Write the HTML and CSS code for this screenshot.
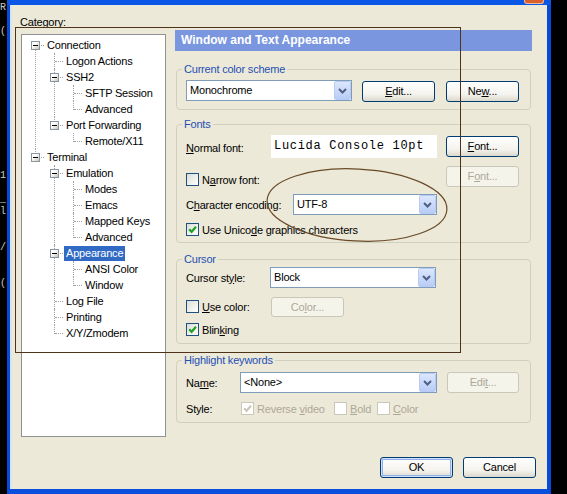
FILE: index.html
```html
<!DOCTYPE html>
<html>
<head>
<meta charset="utf-8">
<title>Global Options</title>
<link rel="stylesheet" href="styles.css">
</head>
<body>
<div class="screen">
  <div class="console">
    <div class="ln">R</div>
    <div class="ln"></div>
    <div class="ln">(</div>
    <div class="ln"></div><div class="ln"></div><div class="ln"></div><div class="ln"></div>
    <div class="ln"></div><div class="ln"></div><div class="ln"></div><div class="ln"></div>
    <div class="ln"></div><div class="ln"></div><div class="ln"></div>
    <div class="ln">1</div>
    <div class="ln"></div>
    <div class="ln">_</div>
    <div class="ln">l</div>
    <div class="ln"></div><div class="ln"></div>
    <div class="ln">/</div>
    <div class="ln"></div><div class="ln"></div>
    <div class="ln">(</div>
  </div>
  <div class="window">
    <div class="titlebar"><span class="close"></span></div>
    <div class="frame">
      <div class="client">
        <div class="main">
          <div class="nav">
            <div class="cat-label">Category:</div>
            <div class="tree">
              <ul class="tree-list">
                <li><div class="node"><span class="toggle"></span><span class="name">Connection</span></div>
                  <ul>
                    <li><div class="node"><span class="name">Logon Actions</span></div></li>
                    <li><div class="node"><span class="toggle"></span><span class="name">SSH2</span></div>
                      <ul>
                        <li><div class="node"><span class="name">SFTP Session</span></div></li>
                        <li><div class="node"><span class="name">Advanced</span></div></li>
                      </ul>
                    </li>
                    <li><div class="node"><span class="toggle"></span><span class="name">Port Forwarding</span></div>
                      <ul>
                        <li><div class="node"><span class="name">Remote/X11</span></div></li>
                      </ul>
                    </li>
                  </ul>
                </li>
                <li><div class="node"><span class="toggle"></span><span class="name">Terminal</span></div>
                  <ul>
                    <li><div class="node"><span class="toggle"></span><span class="name">Emulation</span></div>
                      <ul>
                        <li><div class="node"><span class="name">Modes</span></div></li>
                        <li><div class="node"><span class="name">Emacs</span></div></li>
                        <li><div class="node"><span class="name">Mapped Keys</span></div></li>
                        <li><div class="node"><span class="name">Advanced</span></div></li>
                      </ul>
                    </li>
                    <li><div class="node"><span class="toggle"></span><span class="name selected">Appearance</span></div>
                      <ul>
                        <li><div class="node"><span class="name">ANSI Color</span></div></li>
                        <li><div class="node"><span class="name">Window</span></div></li>
                      </ul>
                    </li>
                    <li><div class="node"><span class="name">Log File</span></div></li>
                    <li><div class="node"><span class="name">Printing</span></div></li>
                    <li><div class="node"><span class="name">X/Y/Zmodem</span></div></li>
                  </ul>
                </li>
              </ul>
            </div>
          </div>

          <div class="panel">
            <div class="panel-title">Window and Text Appearance</div>

            <fieldset class="group g-scheme">
              <legend>Current color scheme</legend>
              <div class="row row-scheme">
                <div class="combo combo-scheme"><span class="combo-text">Monochrome</span><span class="drop"><svg viewBox="0 0 15 17"><path d="M4 7l3.5 3.5L11 7"/></svg></span></div>
                <button class="btn btn-edit"><u>E</u>dit...</button>
                <button class="btn btn-new">Ne<u>w</u>...</button>
              </div>
            </fieldset>

            <fieldset class="group g-fonts">
              <legend>Fonts</legend>
              <div class="fonts-grid">
                <div class="col-main">
                  <div class="row row-font">
                    <span class="lbl lbl-font"><u>N</u>ormal font:</span>
                    <span class="fontbox">Lucida Console 10pt</span>
                  </div>
                  <div class="row row-narrow">
                    <span class="check"><span class="chk"></span><span>N<u>a</u>rrow font:</span></span>
                  </div>
                  <div class="row row-enc">
                    <span class="lbl lbl-enc">C<u>h</u>aracter encoding:</span>
                    <div class="combo combo-enc"><span class="combo-text">UTF-8</span><span class="drop"><svg viewBox="0 0 15 17"><path d="M4 7l3.5 3.5L11 7"/></svg></span></div>
                  </div>
                  <div class="row row-unicode">
                    <span class="check"><span class="chk"><svg class="tick" viewBox="0 0 11 11"><path d="M2.2 5.2l2.4 2.6 4.4-5"/></svg></span><span>Use Unico<u>d</u>e graphics characters</span></span>
                  </div>
                </div>
                <div class="col-btns">
                  <button class="btn btn-font"><u>F</u>ont...</button>
                  <button class="btn btn-font2" disabled>F<u>o</u>nt...</button>
                </div>
              </div>
            </fieldset>

            <fieldset class="group g-cursor">
              <legend>Cursor</legend>
              <div class="row row-cstyle">
                <span class="lbl lbl-cstyle">Cursor st<u>y</u>le:</span>
                <div class="combo combo-cstyle"><span class="combo-text">Block</span><span class="drop"><svg viewBox="0 0 15 17"><path d="M4 7l3.5 3.5L11 7"/></svg></span></div>
              </div>
              <div class="row row-usecolor">
                <span class="check check-usecolor"><span class="chk"></span><span><u>U</u>se color:</span></span>
                <button class="btn btn-color" disabled>Co<u>l</u>or...</button>
              </div>
              <div class="row row-blink">
                <span class="check"><span class="chk"><svg class="tick" viewBox="0 0 11 11"><path d="M2.2 5.2l2.4 2.6 4.4-5"/></svg></span><span>Blin<u>k</u>ing</span></span>
              </div>
            </fieldset>

            <fieldset class="group g-highlight">
              <legend>Highlight keywords</legend>
              <div class="row row-name">
                <span class="lbl lbl-name">Na<u>m</u>e:</span>
                <div class="combo combo-name"><span class="combo-text">&lt;None&gt;</span><span class="drop"><svg viewBox="0 0 15 17"><path d="M4 7l3.5 3.5L11 7"/></svg></span></div>
                <button class="btn btn-hedit" disabled>Edi<u>t</u>...</button>
              </div>
              <div class="row row-style">
                <span class="lbl lbl-style">Style:</span>
                <span class="check dis opt-reverse"><span class="chk"><svg class="tick" viewBox="0 0 11 11"><path d="M2.2 5.2l2.4 2.6 4.4-5"/></svg></span><span>Reverse <u>v</u>ideo</span></span>
                <span class="check dis opt-bold"><span class="chk"></span><span><u>B</u>old</span></span>
                <span class="check dis opt-color"><span class="chk"></span><span><u>C</u>olor</span></span>
              </div>
            </fieldset>
          </div>
        </div>

        <div class="actions">
          <button class="btn btn-default">OK</button>
          <button class="btn">Cancel</button>
        </div>
      </div>
    </div>
  </div>
</div>

<svg class="annot" width="567" height="494" viewBox="0 0 567 494">
  <rect x="15.5" y="27.5" width="445" height="325"/>
  <ellipse cx="357" cy="205" rx="90" ry="36" transform="rotate(3 357 205)"/>
</svg>
</body>
</html>
```

FILE: styles.css
```css
* { box-sizing: border-box; }

html, body { margin: 0; padding: 0; }

body {
  width: 567px;
  height: 494px;
  overflow: hidden;
  position: relative;
  background: #000;
  font-family: "Liberation Sans", Arial, sans-serif;
  font-size: 11px;
  letter-spacing: -0.2px;
  color: #000;
}

.screen {
  display: flex;
  height: 494px;
}

/* console behind the dialog (only a sliver visible) */
.console {
  width: 7px;
  flex: none;
  overflow: hidden;
  display: flex;
  flex-direction: column;
  padding-top: 2px;
  font-family: "Liberation Mono", monospace;
  font-size: 10px;
  line-height: 12px;
  letter-spacing: 0;
  color: #c8c8c8;
}
.console .ln {
  height: 12px;
  white-space: nowrap;
}

/* dialog window */
.window {
  width: 544px;
  flex: none;
  display: flex;
  flex-direction: column;
}

.titlebar {
  height: 5px;
  flex: none;
  background: #0a56e6;
  display: flex;
  justify-content: flex-end;
  padding-right: 7px;
}
.close {
  width: 20px;
  height: 4px;
  background: #d9602c;
  border: 1px solid #f1b89a;
  border-top: none;
  border-radius: 0 0 3px 3px;
}

.frame {
  flex: 1;
  display: flex;
  border-left: 3px solid #0749d8;
  border-right: 4px solid #0749d8;
  border-bottom: 5px solid #0a4fdc;
}

.client {
  flex: 1;
  display: flex;
  flex-direction: column;
  background: #ece9d8;
  border-left: 2px solid #d6e5f5;
}

.main {
  display: flex;
  padding: 11px 0 0 8px;
}

/* category tree */
.nav {
  width: 146px;
  flex: none;
}
.cat-label {
  line-height: 13px;
  margin-bottom: 5px;
}
.tree {
  margin-left: 1px;
  width: 145px;
  height: 403px;
  border: 1px solid #8f9293;
  background: #fff;
  padding-top: 2px;
  overflow: hidden;
}
.tree ul {
  list-style: none;
  margin: 0;
  padding: 0;
}
.tree ul ul {
  padding-left: 19px;
}
.tree li {
  position: relative;
}
.tree li::before {
  content: "";
  position: absolute;
  left: 13px;
  top: 0;
  bottom: 0;
  border-left: 1px dotted #a0a0a0;
}
.tree li:last-child::before {
  bottom: auto;
  height: 9px;
}
.tree-list > li:first-child::before {
  top: 8px;
}
.node {
  position: relative;
  height: 16px;
  padding-left: 23px;
  display: flex;
  align-items: center;
}
.node::before {
  content: "";
  position: absolute;
  left: 14px;
  top: 8px;
  width: 8px;
  border-top: 1px dotted #a0a0a0;
}
.toggle {
  position: absolute;
  left: 9px;
  top: 4px;
  width: 9px;
  height: 9px;
  border: 1px solid #8a97a3;
  background: linear-gradient(135deg, #ffffff 35%, #c8c5b6);
  z-index: 1;
}
.toggle::after {
  content: "";
  position: absolute;
  left: 1px;
  top: 3px;
  width: 5px;
  height: 1px;
  background: #000;
}
.name {
  padding: 0 2px;
  line-height: 15px;
  white-space: nowrap;
}
.name.selected {
  background: #316ac5;
  color: #fff;
}

/* right panel */
.panel {
  width: 357px;
  flex: none;
  margin-left: 9px;
  margin-top: 14px;
}
.panel-title {
  height: 21px;
  background: #7a96df;
  color: #fff;
  font-weight: bold;
  font-size: 12px;
  letter-spacing: 0;
  line-height: 21px;
  padding-left: 6px;
}

.group {
  margin: 12px 1px 0;
  border: 1px solid #d0d0bf;
  border-radius: 4px;
  padding: 4px 0 7px 9px;
  min-width: 0;
}
.group legend {
  padding: 0 2px;
  margin-left: -4px;
  line-height: 13px;
  color: #1e4fb4;
}
.g-fonts { margin-top: 8px; padding-bottom: 6px; }
.g-cursor { margin-top: 10px; padding-top: 1px; padding-bottom: 7px; }
.g-highlight { margin-top: 10px; padding-top: 5px; padding-bottom: 7px; }

.row {
  display: flex;
  align-items: center;
}
.lbl {
  flex: none;
  white-space: nowrap;
}

/* combobox */
.combo {
  display: flex;
  align-items: stretch;
  height: 21px;
  flex: none;
  border: 1px solid #7f9db9;
  background: #fff;
}
.combo-text {
  flex: 1;
  padding-left: 3px;
  line-height: 19px;
  white-space: nowrap;
}
.drop {
  width: 17px;
  flex: none;
  background: linear-gradient(#dce7fd, #b8ccf6);
  border: 1px solid #b7cbf4;
  border-radius: 2px;
}
.drop svg {
  display: block;
  width: 15px;
  height: 17px;
}
.drop path {
  fill: none;
  stroke: #4d6185;
  stroke-width: 2;
}

/* buttons */
.btn {
  width: 73px;
  height: 21px;
  flex: none;
  padding: 0;
  border: 1px solid #003c74;
  border-radius: 3px;
  background: linear-gradient(#ffffff, #f4f3ee 65%, #dcd8cc);
  font: inherit;
  letter-spacing: inherit;
  color: #000;
  text-align: center;
  line-height: 19px;
}
.btn:disabled {
  border-color: #c9c7ba;
  background: #f5f4ea;
  color: #aca899;
}
.btn-default {
  box-shadow: inset 0 0 0 1px #cfe0fb, inset 0 0 0 2px #8fb0ea;
}

/* checkboxes */
.check {
  display: flex;
  align-items: center;
  gap: 3px;
  height: 13px;
  white-space: nowrap;
  flex: none;
}
.chk {
  width: 13px;
  height: 13px;
  flex: none;
  border: 1px solid #1c5180;
  background: linear-gradient(135deg, #dcdcd7, #ffffff);
}
.tick {
  display: block;
  width: 11px;
  height: 11px;
}
.tick path {
  fill: none;
  stroke: #21a121;
  stroke-width: 2.2;
}
.check.dis { color: #aca899; }
.check.dis .chk {
  border-color: #cac8bb;
  background: #fff;
}
.check.dis .tick path { stroke: #cac8bb; }

/* group 1 */
.row-scheme { align-items: flex-start; }
.combo-scheme { width: 166px; }
.btn-edit { margin-left: 10px; margin-top: 1px; }
.btn-new { margin-left: 11px; margin-top: 1px; }

/* group 2 */
.fonts-grid { display: flex; }
.col-main { width: 251px; flex: none; }
.col-btns {
  display: flex;
  flex-direction: column;
  margin-left: 9px;
}
.btn-font { margin-top: 1px; }
.btn-font2 { margin-top: 9px; }
.row-font { height: 23px; }
.lbl-font { width: 85px; padding-top: 2px; }
.fontbox {
  width: 166px;
  height: 23px;
  background: #fff;
  font-family: "Liberation Mono", monospace;
  font-size: 12px;
  letter-spacing: 0.7px;
  line-height: 23px;
  padding-left: 3px;
  white-space: nowrap;
}
.row-narrow { margin-top: 15px; }
.row-enc { margin-top: 8px; height: 21px; }
.lbl-enc { width: 107px; }
.combo-enc { width: 144px; }
.row-unicode { margin-top: 8px; }

/* group 3 */
.row-cstyle { height: 21px; }
.lbl-cstyle { width: 84px; }
.combo-cstyle { width: 166px; }
.row-usecolor { margin-top: 8px; height: 21px; }
.check-usecolor { width: 85px; }
.btn-color { height: 20px; line-height: 18px; }
.row-blink { margin-top: 6px; }

/* group 4 */
.row-name { height: 21px; }
.lbl-name { width: 54px; }
.combo-name { width: 197px; }
.btn-hedit { margin-left: 10px; width: 72px; }
.row-style { margin-top: 9px; height: 13px; }
.lbl-style { width: 55px; }
.opt-reverse { width: 93px; }
.opt-bold { width: 43px; }

/* bottom buttons */
.actions {
  display: flex;
  justify-content: flex-end;
  gap: 10px;
  padding-right: 11px;
  margin-top: 20px;
}

/* hand-drawn annotation over the screenshot */
.annot {
  position: absolute;
  left: 0;
  top: 0;
  pointer-events: none;
}
.annot rect,
.annot ellipse {
  fill: none;
  stroke: #4e3318;
  stroke-width: 1;
}
.annot ellipse { stroke: #6a4a28; stroke-width: 1.2; }
```
